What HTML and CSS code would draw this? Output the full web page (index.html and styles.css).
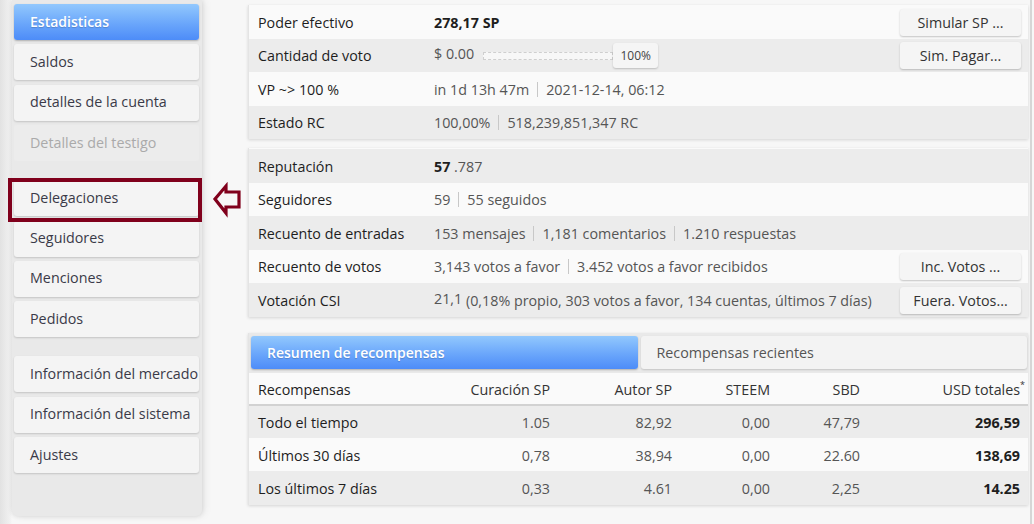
FILE: index.html
```html
<!DOCTYPE html>
<html lang="es">
<head>
<meta charset="utf-8">
<title>Estadisticas</title>
<link rel="stylesheet" href="styles.css">
</head>
<body>
<div class="page">
  <nav class="sidebar">
    <div class="group">
      <a class="item active">Estadisticas</a>
      <a class="item">Saldos</a>
      <a class="item">detalles de la cuenta</a>
      <a class="item disabled">Detalles del testigo</a>
    </div>
    <div class="group">
      <a class="item">Delegaciones</a>
      <a class="item">Seguidores</a>
      <a class="item">Menciones</a>
      <a class="item">Pedidos</a>
    </div>
    <div class="group">
      <a class="item">Información del mercado</a>
      <a class="item">Información del sistema</a>
      <a class="item">Ajustes</a>
    </div>
    <div class="highlight"></div>
    <svg class="pointer" width="34" height="40" viewBox="0 0 34 40">
      <polygon points="5,19 16,6 16,12 29,12 29,27 16,27 16,33" fill="none" stroke="#80001c" stroke-width="3.2" stroke-linejoin="miter"/>
    </svg>
  </nav>

  <main class="main">
    <section class="card">
      <div class="row">
        <div class="label">Poder efectivo</div>
        <div class="value"><b class="strong">278,17 SP</b></div>
        <button class="btn">Simular SP ...</button>
      </div>
      <div class="row alt">
        <div class="label">Cantidad de voto</div>
        <div class="value">$ 0.00<span class="slider"><span class="track"></span><span class="handle">100%</span></span></div>
        <button class="btn">Sim. Pagar...</button>
      </div>
      <div class="row">
        <div class="label">VP ~&gt; 100 %</div>
        <div class="value">in 1d 13h 47m<i class="sep"></i>2021-12-14, 06:12</div>
      </div>
      <div class="row alt">
        <div class="label">Estado RC</div>
        <div class="value">100,00%<i class="sep"></i>518,239,851,347 RC</div>
      </div>
    </section>

    <section class="card card2">
      <div class="row alt">
        <div class="label">Reputación</div>
        <div class="value"><b class="strong">57</b> .787</div>
      </div>
      <div class="row">
        <div class="label">Seguidores</div>
        <div class="value">59<i class="sep"></i>55 seguidos</div>
      </div>
      <div class="row alt">
        <div class="label">Recuento de entradas</div>
        <div class="value">153 mensajes<i class="sep"></i>1,181 comentarios<i class="sep"></i>1.210 respuestas</div>
      </div>
      <div class="row">
        <div class="label">Recuento de votos</div>
        <div class="value">3,143 votos a favor<i class="sep"></i>3.452 votos a favor recibidos</div>
        <button class="btn">Inc. Votos ...</button>
      </div>
      <div class="row alt">
        <div class="label">Votación CSI</div>
        <div class="value"><span class="csi">21,1</span> (0,18% propio, 303 votos a favor, 134 cuentas, últimos 7 días)</div>
        <button class="btn">Fuera. Votos...</button>
      </div>
    </section>

    <section class="card card3">
      <div class="tabs">
        <div class="tab active">Resumen de recompensas</div>
        <div class="tab">Recompensas recientes</div>
      </div>
      <table class="rewards">
        <colgroup>
          <col class="c1"><col class="c2"><col class="c3"><col class="c4"><col class="c5"><col class="c6">
        </colgroup>
        <thead>
          <tr>
            <th class="l">Recompensas</th>
            <th>Curación SP</th>
            <th>Autor SP</th>
            <th>STEEM</th>
            <th>SBD</th>
            <th>USD totales<sup>*</sup></th>
          </tr>
        </thead>
        <tbody>
          <tr class="alt">
            <td class="l">Todo el tiempo</td><td>1.05</td><td>82,92</td><td>0,00</td><td>47,79</td><td class="b">296,59</td>
          </tr>
          <tr>
            <td class="l">Últimos 30 días</td><td>0,78</td><td>38,94</td><td>0,00</td><td>22.60</td><td class="b">138,69</td>
          </tr>
          <tr class="alt">
            <td class="l">Los últimos 7 días</td><td>0,33</td><td>4.61</td><td>0,00</td><td>2,25</td><td class="b">14.25</td>
          </tr>
        </tbody>
      </table>
    </section>
  </main>
  <div class="edge"></div>
</div>
</body>
</html>
```

FILE: styles.css
```css
* { box-sizing: border-box; }

html, body {
  margin: 0;
  padding: 0;
  height: 100%;
}

body {
  font-family: "Open Sans", "DejaVu Sans", sans-serif;
  font-size: 14.3px;
  color: #333;
  background: #f7f7f7;
  overflow: hidden;
}

.page {
  display: flex;
  align-items: flex-start;
  width: 1034px;
  height: 524px;
  background: linear-gradient(to right, #e2e2e2 0, #f1f1f1 10px, #f7f7f7 12px);
}

/* ---------- sidebar ---------- */
.sidebar {
  position: relative;
  width: 190px;
  height: 516px;
  margin-left: 12px;
  padding: 4px 3px 0 2px;
  background: #e9e9e9;
  border-radius: 0 0 6px 6px;
  box-shadow: 0 0 5px rgba(0, 0, 0, 0.12), 3px 0 8px rgba(0, 0, 0, 0.06);
  display: flex;
  flex-direction: column;
  gap: 19px;
}

.group {
  display: flex;
  flex-direction: column;
  gap: 4.4px;
}

.item {
  display: flex;
  align-items: center;
  height: 36px;
  padding: 0 0 2px 16px;
  background: #f4f4f4;
  border-radius: 3px;
  box-shadow: 0 1px 2px rgba(0, 0, 0, 0.16);
  color: #3a3a48;
  white-space: nowrap;
}

.item.active {
  background: linear-gradient(to bottom, #92c8fd 0%, #6aa6fb 55%, #4d8cf8 100%);
  color: #fff;
  font-size: 14px;
  font-weight: 600;
  text-shadow: 0 1px 1px rgba(0, 0, 0, 0.18);
  box-shadow: 0 1px 2px rgba(0, 0, 0, 0.25);
}

.item.disabled {
  background: #ececec;
  color: #aaa;
  box-shadow: none;
}

.highlight {
  position: absolute;
  left: -4px;
  top: 178px;
  width: 194px;
  height: 44px;
  border: 4px solid #80001c;
}

.pointer {
  position: absolute;
  left: 198px;
  top: 180px;
}

/* ---------- main ---------- */
.main {
  width: 780px;
  margin-left: 46px;
  padding-top: 5px;
  display: flex;
  flex-direction: column;
}

.card {
  background: #fafafa;
  box-shadow: 0 1px 3px rgba(0, 0, 0, 0.14);
  border-left: 1px solid #e4e4e4;
}

.card2 {
  margin-top: 9px;
  padding-top: 1px;
}

.card3 {
  margin-top: 16px;
}

.row {
  display: flex;
  align-items: center;
  height: 33.5px;
  padding-top: 1px;
  background: #fafafa;
}

.row.alt {
  background: #ececec;
}

.label {
  width: 185px;
  padding-left: 9px;
  color: #1e1e1e;
  white-space: nowrap;
}

.value {
  flex: 1;
  color: #555;
  white-space: nowrap;
}

.strong {
  color: #1e1e1e;
  font-weight: 700;
}

.csi {
  display: inline-block;
  transform: translateY(-2px);
}

.sep {
  display: inline-block;
  width: 1px;
  height: 15px;
  background: #c8c8c8;
  margin: 0 8px;
  vertical-align: -2px;
}

.btn {
  width: 121px;
  height: 27px;
  margin-right: 7px;
  padding: 0;
  border: none;
  border-radius: 3px;
  background: #f5f5f5;
  box-shadow: 0 1px 2px rgba(0, 0, 0, 0.22);
  font-family: inherit;
  font-size: 14.3px;
  color: #333;
}

.slider {
  display: inline-flex;
  align-items: center;
  margin-left: 9px;
  vertical-align: middle;
}

.track {
  width: 130px;
  height: 8px;
  border: 1px dashed #cfcfcf;
  background: #f7f7f7;
}

.handle {
  display: flex;
  align-items: center;
  justify-content: center;
  width: 45px;
  height: 25px;
  border-radius: 3px;
  background: #f5f5f5;
  box-shadow: 0 1px 2px rgba(0, 0, 0, 0.2);
  font-size: 12px;
  color: #444;
}

/* ---------- tabs + rewards ---------- */
.tabs {
  display: flex;
  gap: 3px;
  padding: 3px 1px 4px 2px;
  background: #e9e9e9;
}

.tab {
  flex: 1;
  display: flex;
  align-items: center;
  height: 33px;
  padding-left: 16px;
  border-radius: 3px;
  background: #f3f3f3;
  box-shadow: 0 1px 2px rgba(0, 0, 0, 0.16);
  color: #555;
}

.tab.active {
  background: linear-gradient(to bottom, #92c8fd 0%, #6aa6fb 55%, #4d8cf8 100%);
  color: #fff;
  font-size: 14px;
  font-weight: 600;
  text-shadow: 0 1px 1px rgba(0, 0, 0, 0.18);
  box-shadow: 0 1px 2px rgba(0, 0, 0, 0.25);
}

.rewards {
  width: 100%;
  border-collapse: collapse;
  table-layout: fixed;
}

.c1 { width: 192px; }
.c2 { width: 119px; }
.c3 { width: 122px; }
.c4 { width: 98px; }
.c5 { width: 90px; }
.c6 { width: 158px; }

.rewards th,
.rewards td {
  padding: 0 10px 0 0;
  text-align: right;
  white-space: nowrap;
  font-weight: 400;
}

.rewards th {
  height: 32px;
  padding-top: 2px;
  color: #333;
  border-bottom: 2px solid #d2d2d2;
}

.rewards td {
  height: 33.4px;
  padding-top: 1px;
  color: #555;
}

.rewards .l {
  text-align: left;
  padding-left: 9px;
  color: #1e1e1e;
}

.rewards th:last-child,
.rewards td:last-child {
  padding-right: 8px;
}

.rewards td.b {
  font-weight: 700;
  color: #1e1e1e;
}

.rewards sup {
  font-size: 9px;
  margin-right: -5px;
  vertical-align: 7px;
  line-height: 0;
}

.rewards tr.alt td {
  background: #ececec;
}

.edge {
  width: 2px;
  height: 524px;
  margin-left: 2px;
  background: #d6d6d6;
}
```
